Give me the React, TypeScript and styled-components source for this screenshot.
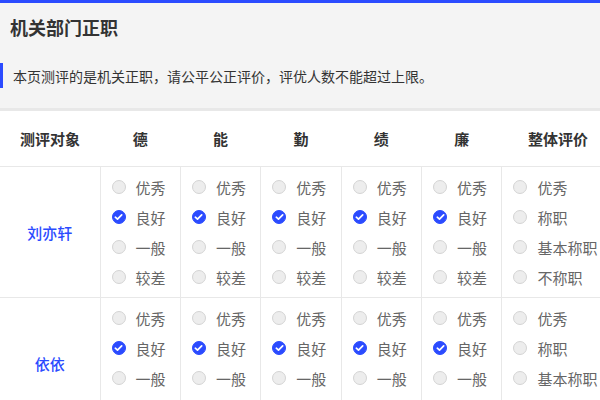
import React from "react";
import styled, { createGlobalStyle } from "styled-components";

const BLUE = "#2b4bff";

const Global = createGlobalStyle`
  html, body { margin: 0; padding: 0; background: #fff; }
  body { font-family: "Noto Sans CJK SC", "Noto Sans", sans-serif; }
`;

const Page = styled.div`
  width: 600px;
  height: 400px;
  overflow: hidden;
  border-top: 3px solid ${BLUE};
  box-sizing: border-box;
`;

const Head = styled.div`
  background: #f4f4f4;
  height: 105px;
  border-bottom: 3px solid #e8e8e8;
  display: flex;
  flex-direction: column;
`;

const Title = styled.h1`
  margin: 0;
  padding: 12px 0 0 10px;
  height: 31px;
  font-size: 18px;
  line-height: 24px;
  font-weight: 700;
  color: #333;
`;

const Notice = styled.div`
  margin-top: 17px;
  height: 25px;
  border-left: 3px solid ${BLUE};
  padding-left: 10px;
  display: flex;
  align-items: center;
  font-size: 14px;
  color: #333;
`;

const Table = styled.table`
  width: 614px;
  border-collapse: collapse;
  table-layout: fixed;
`;

const Th = styled.th`
  height: 55px;
  padding: 0;
  font-size: 15px;
  font-weight: 700;
  color: #333;
  text-align: center;
  border-bottom: 1px solid #e8e8e8;
`;

const NameCell = styled.td`
  padding: 0;
  text-align: center;
  font-size: 15px;
  font-weight: 500;
  color: ${BLUE};
  border-bottom: 1px solid #e8e8e8;
  border-right: 1px solid #e8e8e8;
`;

const OptCell = styled.td`
  padding: 5px 0 5px 11px;
  vertical-align: top;
  border-bottom: 1px solid #e8e8e8;
  border-right: 1px solid #e8e8e8;
  &:last-child { border-right: none; }
`;

const Option = styled.div`
  height: 30px;
  display: flex;
  align-items: center;
  gap: 10px;
  font-size: 15px;
  color: #666;
  white-space: nowrap;
`;

const Dot = styled.span<{ $on: boolean }>`
  width: 14px;
  height: 14px;
  border-radius: 50%;
  box-sizing: border-box;
  flex: none;
  display: flex;
  align-items: center;
  justify-content: center;
  background: ${(p) => (p.$on ? BLUE : "#ededed")};
  border: 1px solid ${(p) => (p.$on ? BLUE : "#d4d4d4")};
`;

const Radio = ({ on, label }: { on: boolean; label: string }) => (
  <Option>
    <Dot $on={on}>
      {on && (
        <svg width="9" height="8" viewBox="0 0 9 8">
          <path d="M1.3 4.2 L3.5 6.2 L7.7 1.8" fill="none" stroke="#fff" strokeWidth="1.7" strokeLinecap="round" strokeLinejoin="round" />
        </svg>
      )}
    </Dot>
    {label}
  </Option>
);

const cats = ["德", "能", "勤", "绩", "廉"];
const std = ["优秀", "良好", "一般", "较差"];
const overall = ["优秀", "称职", "基本称职", "不称职"];

const people = ["刘亦轩", "依依"];

export default function App() {
  return (
    <Page>
      <Global />
      <Head>
        <Title>机关部门正职</Title>
        <Notice>本页测评的是机关正职，请公平公正评价，评优人数不能超过上限。</Notice>
      </Head>
      <Table>
        <colgroup>
          <col style={{ width: 100 }} />
          {cats.map((c) => (
            <col key={c} style={{ width: 80.4 }} />
          ))}
          <col />
        </colgroup>
        <thead>
          <tr>
            <Th>测评对象</Th>
            {cats.map((c) => (
              <Th key={c}>{c}</Th>
            ))}
            <Th>整体评价</Th>
          </tr>
        </thead>
        <tbody>
          {people.map((name) => (
            <tr key={name}>
              <NameCell>{name}</NameCell>
              {cats.map((c) => (
                <OptCell key={c}>
                  {std.map((s) => (
                    <Radio key={s} on={s === "良好"} label={s} />
                  ))}
                </OptCell>
              ))}
              <OptCell>
                {overall.map((s) => (
                  <Radio key={s} on={false} label={s} />
                ))}
              </OptCell>
            </tr>
          ))}
        </tbody>
      </Table>
    </Page>
  );
}
